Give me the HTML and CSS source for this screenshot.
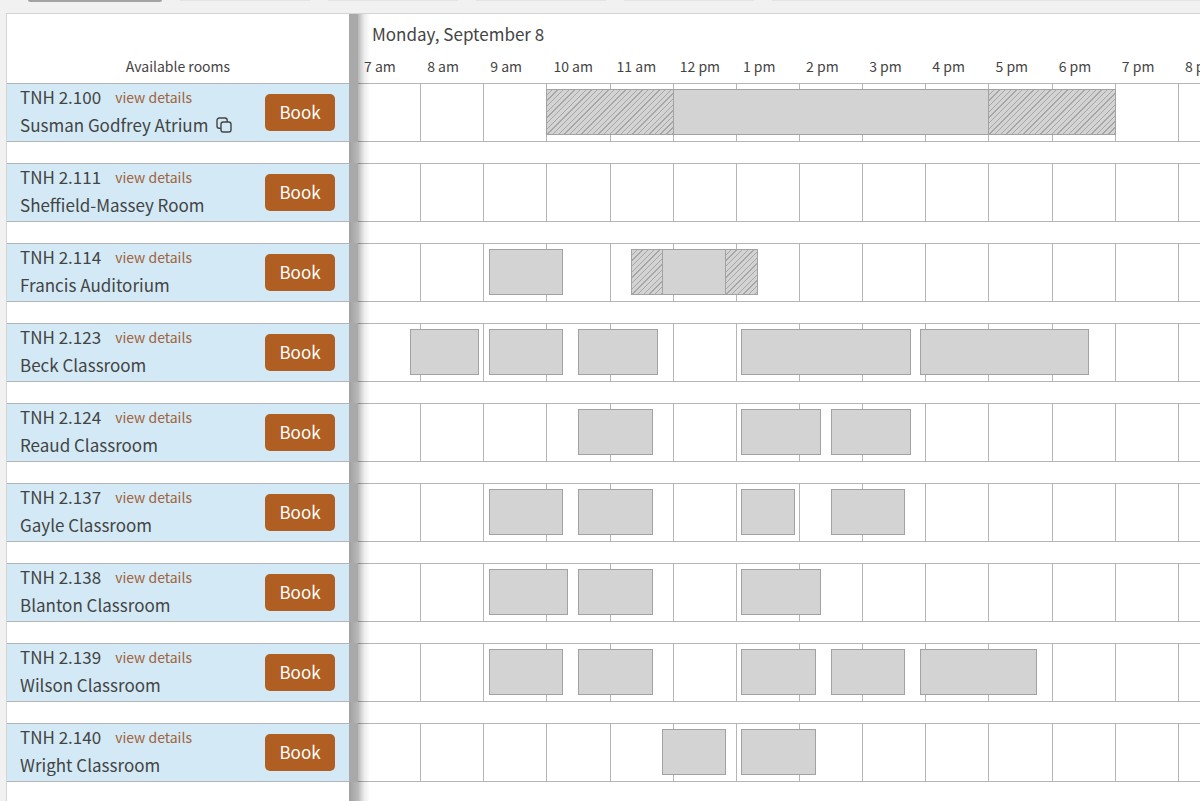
FILE: index.html
```
<!DOCTYPE html>
<html lang="en">
<head>
  <meta charset="UTF-8" />
  <meta name="viewport" content="width=device-width, initial-scale=1.0"/>
  <title>Room Reservations</title>
  <link rel="stylesheet" href="styles.css">
</head>
<body>
  <div class="tabs">
    <span class="tab active"></span>
    <span class="tab"></span>
    <span class="tab"></span>
    <span class="tab"></span>
    <span class="tab"></span>
    <span class="tab wide"></span>
  </div>

  <main class="schedule">
    <section class="rooms">
      <div class="rooms-head">Available rooms</div>
      <div id="roomList"></div>
    </section>
    <div class="divider">
      <div class="divider-head"></div>
      <div id="dividerRows"></div>
    </div>
    <section class="timeline">
      <div class="timeline-head">
        <h1>Monday, September 8</h1>
        <div class="hours" id="hourLabels"></div>
      </div>
      <div id="lanes"></div>
    </section>
  </main>

  <script>
    // start and end are counted in 5 minute steps from 7 am, "hold" is setup / teardown time
    const rooms = [
      { id: 'TNH 2.100', name: 'Susman Godfrey Atrium', combined: true, events: [[36, 60, 'hold'], [60, 120], [120, 144, 'hold']] },
      { id: 'TNH 2.111', name: 'Sheffield-Massey Room', events: [] },
      { id: 'TNH 2.114', name: 'Francis Auditorium', events: [[25, 39], [52, 58, 'hold'], [58, 70], [70, 76, 'hold']] },
      { id: 'TNH 2.123', name: 'Beck Classroom', events: [[10, 23], [25, 39], [42, 57], [73, 105], [107, 139]] },
      { id: 'TNH 2.124', name: 'Reaud Classroom', events: [[42, 56], [73, 88], [90, 105]] },
      { id: 'TNH 2.137', name: 'Gayle Classroom', events: [[25, 39], [42, 56], [73, 83], [90, 104]] },
      { id: 'TNH 2.138', name: 'Blanton Classroom', events: [[25, 40], [42, 56], [73, 88]] },
      { id: 'TNH 2.139', name: 'Wilson Classroom', events: [[25, 39], [42, 56], [73, 87], [90, 104], [107, 129]] },
      { id: 'TNH 2.140', name: 'Wright Classroom', events: [[58, 70], [73, 87]] }
    ];
    const hours = ['7 am', '8 am', '9 am', '10 am', '11 am', '12 pm', '1 pm', '2 pm', '3 pm', '4 pm', '5 pm', '6 pm', '7 pm', '8 pm'];

    const copyIcon = `<svg class="copy" viewBox="0 0 16 16" aria-hidden="true">
      <rect x="5" y="5" width="10" height="10" rx="2.2"/>
      <path d="M5 11.2H3.2A2.2 2.2 0 0 1 1 9V3.2A2.2 2.2 0 0 1 3.2 1H9a2.2 2.2 0 0 1 2.2 2.2V5"/>
    </svg>`;

    // the last visible hour is only partly on screen
    const column = (i) => `${i * 12 + 1} / ${Math.min(i * 12 + 13, 161)}`;

    document.getElementById('hourLabels').innerHTML = hours
      .map((h, i) => `<span style="grid-column: ${column(i)}">${h}</span>`).join('');

    document.getElementById('roomList').innerHTML = rooms.map(room => `
      <div class="room">
        <div class="room-info">
          <div class="room-line"><span>${room.id}</span><a href="#">view details</a></div>
          <div class="room-line"><span>${room.name}</span>${room.combined ? copyIcon : ''}</div>
        </div>
        <button type="button" class="book">Book</button>
      </div>`).join('');

    document.getElementById('dividerRows').innerHTML = rooms.map(() => '<div class="divider-row"></div>').join('');

    document.getElementById('lanes').innerHTML = rooms.map(room => `
      <div class="lane">
        ${hours.map((h, i) => `<div class="hour" style="grid-column: ${column(i)}"></div>`).join('')}
        ${room.events.map(([start, end, type]) => `<div class="event ${type || ''}" style="grid-column: ${start + 1} / ${end + 1}"></div>`).join('')}
      </div>`).join('');
  </script>
</body>
</html>
```
FILE: styles.css
```
* {
  box-sizing: border-box;
}
body {
  font-family: "Noto Sans CJK SC", "Open Sans", sans-serif;
  background: #f1f1f1;
  color: #444;
  margin: 0;
  overflow: hidden;
}
.tabs {
  display: flex;
  gap: 18px;
  height: 13px;
  padding-left: 28px;
}
.tab {
  width: 130px;
  height: 1px;
  background: #e4e4e4;
}
.tab.active {
  width: 134px;
  height: 2px;
  background: #a3a3a3;
  border-radius: 0 0 3px 3px;
}
.tab.wide {
  flex: 1;
}
.schedule {
  display: flex;
  min-height: calc(100vh - 13px);
  margin-left: 6px;
  background: #fff;
  border-top: 1px solid #d4d4d4;
  border-left: 1px solid #d4d4d4;
}

/* room list */
.rooms {
  width: 342px;
  flex: none;
}
.rooms-head {
  height: 69px;
  padding-top: 42px;
  font-size: 14px;
  line-height: 20px;
  text-align: center;
}
.room {
  display: flex;
  align-items: center;
  justify-content: space-between;
  height: 59px;
  margin-bottom: 21px;
  padding: 0 14px 0 13px;
  background: #d3eaf6;
  border-top: 1px solid #b5b5b5;
  border-bottom: 1px solid #b5b5b5;
}
.room-info {
  padding-bottom: 4px;
}
.room-line {
  display: flex;
  align-items: center;
  gap: 8px;
  font-size: 17px;
  line-height: 28px;
}
.room-line a {
  margin-left: 6px;
  color: #a0623c;
  font-size: 14px;
  text-decoration: none;
}
.copy {
  width: 16px;
  height: 16px;
  fill: none;
  stroke: #444;
  stroke-width: 1.4;
}
.book {
  width: 70px;
  height: 37px;
  padding: 0 0 3px;
  border: none;
  border-radius: 5px;
  background: #b05e22;
  color: #fff;
  font-family: inherit;
  font-size: 17px;
  font-weight: 400;
  cursor: pointer;
}

/* frozen column edge */
.divider {
  width: 21px;
  flex: none;
  margin-right: -12px;
  background: linear-gradient(to right, #a0a0a0, rgba(0,0,0,0.28) 9px, rgba(0,0,0,0.08) 15px, rgba(0,0,0,0));
  z-index: 1;
}
.divider-head, .divider-row {
  width: 9px;
  height: 69px;
  background: #a9a9a9;
}
.divider-row {
  height: 59px;
  margin-bottom: 21px;
}

/* timeline, 160 columns of 5 minutes */
.timeline {
  flex: 1;
  min-width: 0;
}
.timeline-head {
  height: 69px;
  padding-top: 6px;
}
h1 {
  margin: 0 0 8px 14px;
  font-size: 17px;
  font-weight: 400;
  line-height: 28px;
}
.hours, .lane {
  display: grid;
  grid-template-columns: repeat(160, minmax(0, 1fr));
}
.hours span {
  padding-left: 6px;
  font-size: 14px;
  line-height: 20px;
  white-space: nowrap;
}
.lane {
  height: 59px;
  margin-bottom: 21px;
  border-top: 1px solid #b5b5b5;
  border-bottom: 1px solid #b5b5b5;
}
.hour {
  grid-row: 1;
  border-right: 1px solid #b5b5b5;
}
.hour:nth-child(14) {
  border-right: none;
}
.event {
  grid-row: 1;
  height: 46px;
  margin: 5px 0 0 -1px;
  background: #d3d3d3;
  border: 1px solid #a2a2a2;
}
.event.hold {
  background: repeating-linear-gradient(135deg, #d3d3d3 0 3px, #a6a6a6 3px 4px);
}
```
